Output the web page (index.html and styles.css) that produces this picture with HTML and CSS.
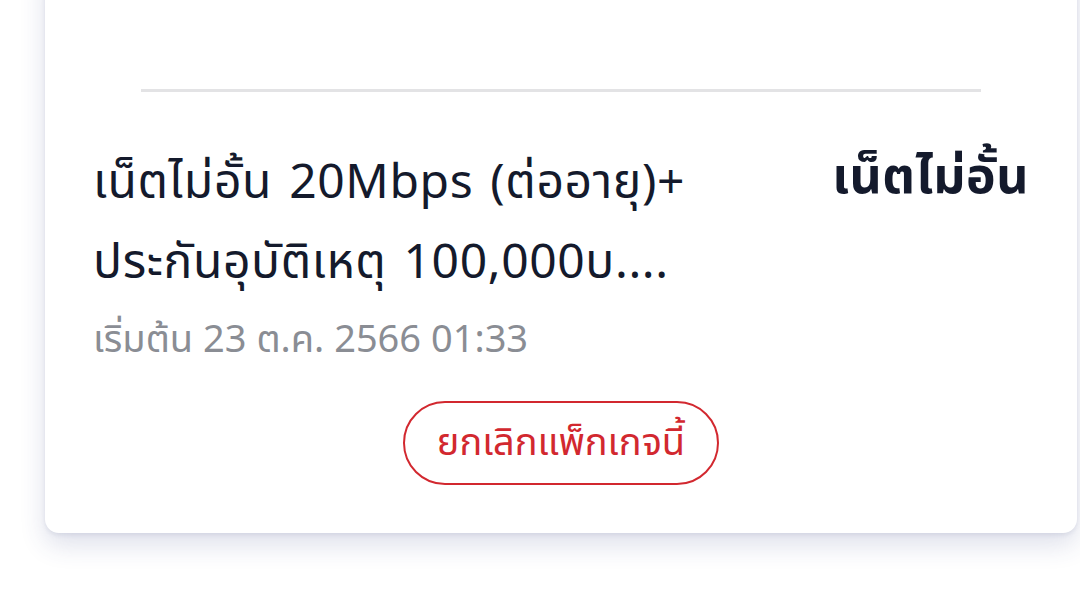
FILE: index.html
```html
<!DOCTYPE html>
<html lang="th">

<head>
    <title>แพ็กเกจของฉัน</title>
    <link rel="stylesheet" href="styles.css">
</head>

<body>
    <div class="card">
        <div class="line"></div>
        <div class="package">
            <div class="package-head">
                <h2 class="package-name">เน็ตไม่อั้น 20Mbps (ต่ออายุ)+<br>ประกันอุบัติเหตุ 100,000บ....</h2>
                <span class="package-type">เน็ตไม่อั้น</span>
            </div>
            <p class="package-date">เริ่มต้น 23 ต.ค. 2566 01:33</p>
            <div class="buttons">
                <button type="button" class="cancel">ยกเลิกแพ็กเกจนี้</button>
            </div>
        </div>
    </div>
</body>

</html>
```
FILE: styles.css
```css
* {
    margin: 0;
    padding: 0;
    box-sizing: border-box;
}

html,
body {
    min-height: 100vh;
}

body {
    padding-bottom: 80px;
    background: #ffffff;
    font-family: "Noto Sans Thai", "Noto Sans", sans-serif;
    color: #141a2c;
}

.card {
    width: 1032px;
    margin: -40px 0 0 45px;
    padding: 129px 50px 48px;
    background: #ffffff;
    border-radius: 14px;
    box-shadow: 0 2px 4px rgba(60, 70, 120, 0.1), 0 12px 26px rgba(50, 65, 130, 0.16);
}

.line {
    height: 3px;
    margin: 0 46px;
    background: #e3e3e5;
}

.package {
    padding-top: 52px;
}

.package-head {
    display: flex;
    justify-content: space-between;
    align-items: flex-start;
}

.package-name {
    margin-left: -2px;
    font-size: 48px;
    font-weight: 400;
    line-height: 80px;
    letter-spacing: 0.6px;
    word-spacing: 4px;
}

.package-type {
    margin-right: -2px;
    font-size: 50px;
    font-weight: 700;
    line-height: 68px;
    letter-spacing: 0.5px;
}

.package-date {
    margin: 7px 0 0 -2px;
    font-size: 38px;
    line-height: 60px;
    color: #8a8d94;
}

.buttons {
    display: flex;
    justify-content: center;
    margin-top: 30px;
}

.cancel {
    height: 84px;
    padding: 0 32px;
    font-family: inherit;
    font-size: 38px;
    color: #d2282f;
    background: #ffffff;
    border: 2px solid #d2282f;
    border-radius: 42px;
}
```
